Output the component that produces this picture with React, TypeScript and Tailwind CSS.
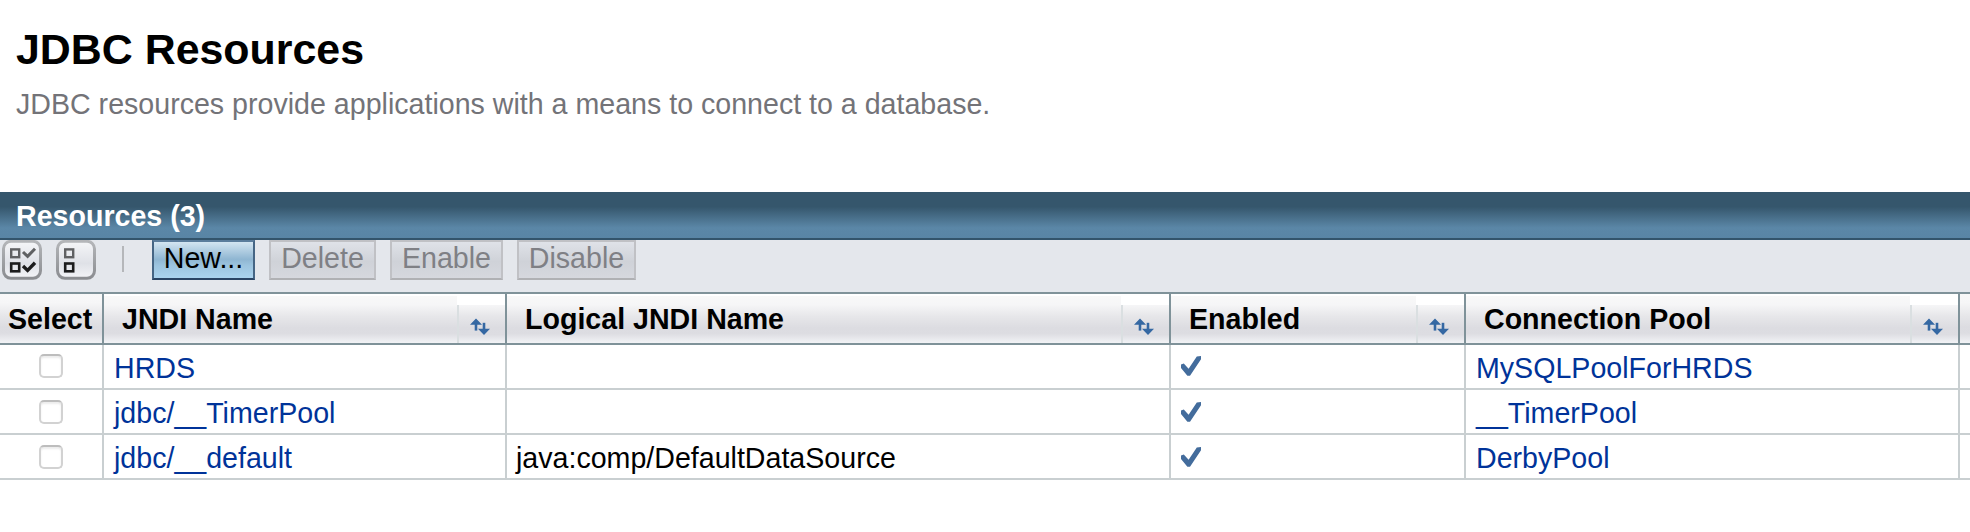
import React from "react";

const rows = [
  { name: "HRDS", logical: "", pool: "MySQLPoolForHRDS", boxPad: "pt-[9px]", checkPad: "pt-[11px]" },
  { name: "jdbc/__TimerPool", logical: "", pool: "__TimerPool", boxPad: "pt-[10px]", checkPad: "pt-[12px]" },
  {
    name: "jdbc/__default",
    logical: "java:comp/DefaultDataSource",
    pool: "DerbyPool",
    boxPad: "pt-[10px]",
    checkPad: "pt-[12px]",
  },
];

const grid = "grid grid-cols-[104px_403px_664px_295px_494px_10px]";
const headFill =
  "bg-[linear-gradient(to_bottom,#f8f8f8_0%,#f6f6f7_18%,#e6e6e9_45%,#dcdce1_68%,#dddde2_80%,#f2f3f6_100%)]";

function SortIcon() {
  return (
    <svg width="20" height="18" viewBox="0 0 20 18" fill="#3568a3" stroke="#3568a3">
      <path d="M6 12.6V4" strokeWidth="2.6" fill="none" />
      <path d="M6 1.4 10.4 6H1.6Z" strokeWidth="1.4" />
      <path d="M14 4.8V13" strokeWidth="2.6" fill="none" />
      <path d="M14 16 18.4 11.4H9.6Z" strokeWidth="1.4" />
    </svg>
  );
}

function HeadCell({ label }: { label: string }) {
  return (
    <div className="flex border-r-2 border-[#7f9299]">
      <div className={`mt-[2px] flex-1 pl-[18px] pt-[7px] font-bold leading-[33px] ${headFill}`}>{label}</div>
      <div
        className="mt-[11px] w-[48px] border-l-2 border-[#dadfe1] bg-[linear-gradient(to_bottom,#f6f6f7_0%,#e6e6e9_30%,#dcdce1_60%,#dddde2_78%,#f2f3f6_100%)] pl-[11px] pt-[13px]"
      >
        <SortIcon />
      </div>
    </div>
  );
}

function CheckMark() {
  return (
    <svg width="20" height="20" viewBox="0 0 20 20" fill="#436c9c">
      <path d="M0 8.6 2.8 7.6 7.6 12.8 15.8.4 20 0V3.2L9 19.8H6.4L0 12Z" />
    </svg>
  );
}

function Button({ label, width }: { label: string; width: string }) {
  return (
    <button
      className={`h-[40px] ${width} border-2 border-[#c0c1c5] border-b-[#b0b1b4] bg-[linear-gradient(to_bottom,#dfe2e8,#cfd2d8_55%,#d6d8de)] pb-[4px] text-center leading-[32px] text-[#7f8085]`}
    >
      {label}
    </button>
  );
}

function ToolIcon({ checks }: { checks: boolean }) {
  return (
    <svg width="40" height="40" viewBox="0 0 40 40" fill="none">
      <defs>
        <linearGradient id="face" x1="0" y1="0" x2="0" y2="1">
          <stop offset="0" stopColor="#f5f6f8" />
          <stop offset=".6" stopColor="#dfe1e7" />
          <stop offset="1" stopColor="#f4f5f8" />
        </linearGradient>
        <linearGradient id="edge" x1="0" y1="0" x2="0" y2="1">
          <stop offset="0" stopColor="#b4b6b9" />
          <stop offset="1" stopColor="#8b8d91" />
        </linearGradient>
      </defs>
      <rect x="1.5" y="1.3" width="37" height="37" rx="7.5" fill="url(#face)" stroke="url(#edge)" strokeWidth="3" />
      <rect x="9.2" y="9.4" width="8" height="7.8" stroke="#606163" strokeWidth="2.4" />
      <rect x="9.2" y="23.5" width="8" height="7.8" stroke="#1c1c1d" strokeWidth="2.6" />
      {checks && (
        <>
          <path d="m21 12 4.6 4.4L33 8.8" stroke="#606163" strokeWidth="3" />
          <path d="m21 26 4.6 4.4L33 22.8" stroke="#1c1c1d" strokeWidth="3.4" />
        </>
      )}
    </svg>
  );
}

export default function App() {
  return (
    <div className="h-[532px] w-[1970px] overflow-hidden bg-white font-['Liberation_Sans',Arial,sans-serif] text-[28.6px] text-black">
      <header className="h-[192px] pl-[16px] pt-[23px]">
        <h1 className="text-[42.9px] font-bold leading-[52px]">JDBC Resources</h1>
        <p className="mt-[11px] leading-[36px] text-[#737378]">
          JDBC resources provide applications with a means to connect to a database.
        </p>
      </header>
      <h2 className="h-[48px] border-b-2 border-[#33546b] bg-[linear-gradient(to_bottom,#35566c_0%,#35566c_32%,#5b87a7_78%,#5985a5_100%)] pl-[16px] font-bold leading-[48px] text-white">
        Resources (3)
      </h2>
      <div className="flex h-[52px] items-start bg-[#e4e7ec]">
        <div className="flex gap-[14px] pl-[2px]">
          <ToolIcon checks />
          <ToolIcon checks={false} />
        </div>
        <div className="ml-[26px] mt-[6px] h-[26px] w-[2px] bg-[#b5b7ba]" />
        <button className="ml-[28px] h-[40px] w-[103px] border-2 border-[#456584] border-b-[#2a4464] border-t-[#5b7d9c] bg-[linear-gradient(to_bottom,#d3e5f1_0%,#8fb6d2_48%,#9cc4df_65%,#aad3ee_100%)] pb-[4px] text-center leading-[32px]">
          New...
        </button>
        <div className="ml-[14px] flex gap-[14px]">
          <Button label="Delete" width="w-[107px]" />
          <Button label="Enable" width="w-[113px]" />
          <Button label="Disable" width="w-[119px]" />
        </div>
      </div>
      <div className={`${grid} h-[53px] border-y-2 border-[#7f9299]`}>
        <div className={`border-r-2 border-[#7f9299] pl-[8px] pt-[9px] font-bold leading-[33px] ${headFill}`}>Select</div>
        <HeadCell label="JNDI Name" />
        <HeadCell label="Logical JNDI Name" />
        <HeadCell label="Enabled" />
        <HeadCell label="Connection Pool" />
        <div className={headFill} />
      </div>
      {rows.map((r) => (
        <div
          key={r.name}
          className={`${grid} h-[45px] grid-rows-[43px] border-b-2 border-[#c9cfd1] leading-[46px] *:border-r-2 *:border-[#c9cfd1] [&>*:last-child]:border-r-0`}
        >
          <div className={`pl-[39px] ${r.boxPad}`}>
            <div className="size-[24px] rounded-[5px] border-2 border-[#d2d2d2] border-t-[#bdbdbd] bg-white shadow-[inset_0_2px_2px_#ececec]" />
          </div>
          <div className="pl-[10px] text-[#003399]">{r.name}</div>
          <div className="pl-[9px]">{r.logical}</div>
          <div className={`pl-[10px] ${r.checkPad}`}>
            <CheckMark />
          </div>
          <div className="pl-[10px] text-[#003399]">{r.pool}</div>
          <div />
        </div>
      ))}
    </div>
  );
}
